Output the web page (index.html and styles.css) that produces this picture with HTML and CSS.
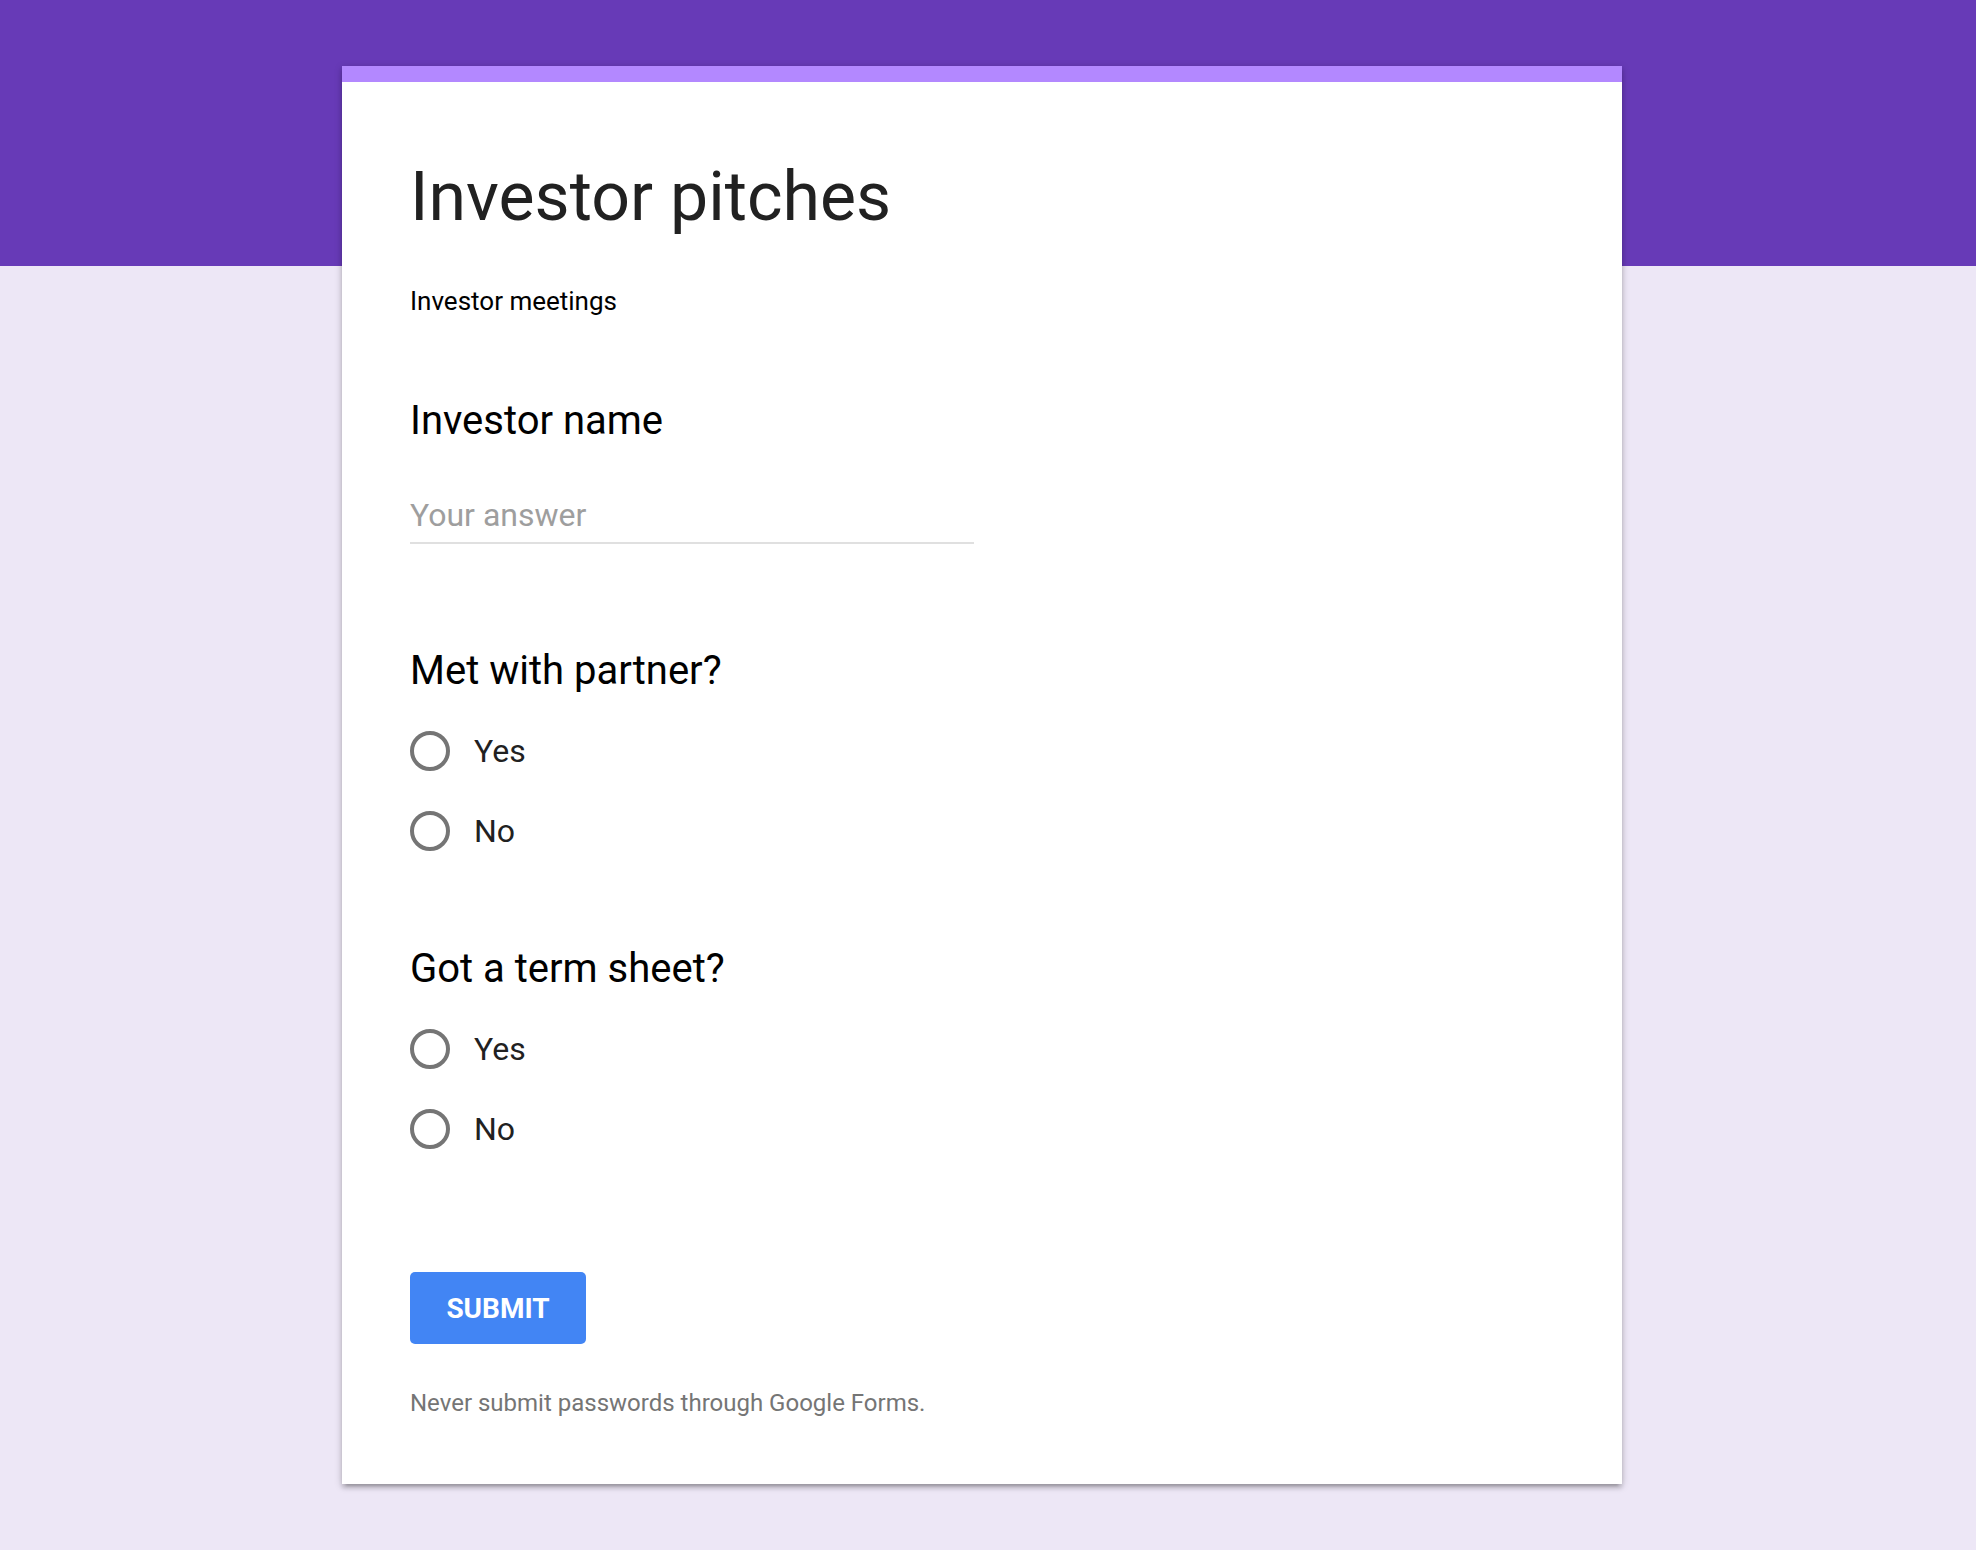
FILE: index.html
```html
<!DOCTYPE html>
<html lang="en">
<head>
<meta charset="utf-8">
<title>Investor pitches</title>
<link rel="stylesheet" href="styles.css">
</head>
<body>
<div class="page">
  <main class="card">
    <h1 class="form-title">Investor pitches</h1>
    <div class="form-desc">Investor meetings</div>

    <section class="question q-text">
      <div class="q-title">Investor name</div>
      <div class="answer">Your answer</div>
    </section>

    <section class="question q-radio">
      <div class="q-title">Met with partner?</div>
      <div class="options">
        <label class="option"><span class="radio"></span><span class="opt-label">Yes</span></label>
        <label class="option"><span class="radio"></span><span class="opt-label">No</span></label>
      </div>
    </section>

    <section class="question q-radio q-second">
      <div class="q-title">Got a term sheet?</div>
      <div class="options">
        <label class="option"><span class="radio"></span><span class="opt-label">Yes</span></label>
        <label class="option"><span class="radio"></span><span class="opt-label">No</span></label>
      </div>
    </section>

    <div class="actions">
      <button class="submit" type="button">SUBMIT</button>
    </div>
    <div class="footer-note">Never submit passwords through Google Forms.</div>
  </main>
</div>
</body>
</html>
```

FILE: styles.css
```css
html, body {
  margin: 0;
  padding: 0;
}

body {
  min-height: 1550px;
  background: linear-gradient(to bottom, #673ab7 0, #673ab7 266px, #ede7f6 266px, #ede7f6 100%);
  font-family: Roboto, "Liberation Sans", Arial, sans-serif;
}

.page {
  display: flex;
  justify-content: center;
  padding: 66px 12px 0 0;
}

.card {
  width: 1280px;
  box-sizing: border-box;
  background: #ffffff;
  border-top: 16px solid #b388ff;
  padding: 75px 68px 65px 68px;
  box-shadow: 0 4px 4px 0 rgba(0, 0, 0, 0.14), 0 6px 2px -4px rgba(0, 0, 0, 0.12), 0 2px 8px 0 rgba(0, 0, 0, 0.2);
}

.form-title {
  margin: 0;
  font-size: 68px;
  line-height: 80px;
  font-weight: 400;
  color: #212121;
}

.form-desc {
  margin-top: 46px;
  font-size: 26px;
  line-height: 36px;
  color: #000000;
}

.q-title {
  font-size: 40px;
  line-height: 48px;
  color: #000000;
}

.q-text {
  margin-top: 78px;
}

.answer {
  margin-top: 50px;
  width: 564px;
  font-size: 32px;
  line-height: 40px;
  color: #9e9e9e;
  padding-bottom: 7px;
  border-bottom: 2px solid #e0e0e0;
}

.q-radio {
  margin-top: 103px;
}

.q-second {
  margin-top: 94px;
}

.options {
  margin-top: 36px;
  display: flex;
  flex-direction: column;
  gap: 40px;
}

.option {
  display: flex;
  align-items: center;
  gap: 24px;
  height: 40px;
}

.radio {
  width: 40px;
  height: 40px;
  box-sizing: border-box;
  border: 4px solid #757575;
  border-radius: 50%;
  flex: none;
}

.opt-label {
  font-size: 32px;
  line-height: 40px;
  color: #212121;
}

.actions {
  margin-top: 123px;
}

.submit {
  display: block;
  width: 176px;
  height: 72px;
  border: none;
  border-radius: 5px;
  background: #4285f4;
  color: #ffffff;
  font-family: Roboto, "Liberation Sans", Arial, sans-serif;
  font-size: 28px;
  font-weight: 700;
  padding: 0;
  letter-spacing: 0;
}

.footer-note {
  margin-top: 43px;
  font-size: 24px;
  line-height: 32px;
  color: #757575;
}
```
